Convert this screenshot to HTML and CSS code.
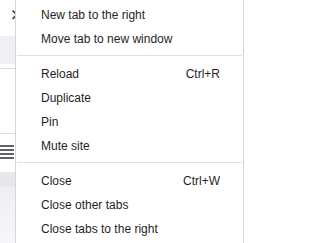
FILE: index.html
```html
<!DOCTYPE html>
<html>
<head>
<meta charset="utf-8">
<link rel="stylesheet" href="styles.css">
</head>
<body>
<div class="page">
  <div class="side">
    <div class="side-top">
      <svg class="close-ic" width="15" height="36" viewBox="0 0 15 36">
        <path d="M12.5 10.5 L17 15 M12.5 19 L17 14.5" stroke="#3c4043" stroke-width="1.6" fill="none"/>
      </svg>
    </div>
    <div class="side-tab"></div>
    <div class="side-gap4"></div>
    <div class="side-line"></div>
    <div class="side-gap64"></div>
    <div class="side-line"></div>
    <div class="side-icon">
      <span class="bar"></span>
      <span class="bar"></span>
      <span class="bar"></span>
      <span class="bar"></span>
    </div>
    <div class="side-row"></div>
    <div class="side-rest"></div>
  </div>
  <div class="menu">
    <div class="item"><span>New tab to the right</span></div>
    <div class="item"><span>Move tab to new window</span></div>
    <div class="sep"></div>
    <div class="item"><span>Reload</span><span class="key">Ctrl+R</span></div>
    <div class="item"><span>Duplicate</span></div>
    <div class="item"><span>Pin</span></div>
    <div class="item"><span>Mute site</span></div>
    <div class="sep"></div>
    <div class="item"><span>Close</span><span class="key">Ctrl+W</span></div>
    <div class="item"><span>Close other tabs</span></div>
    <div class="item"><span>Close tabs to the right</span></div>
  </div>
</div>
</body>
</html>
```

FILE: styles.css
```css
html, body {
  margin: 0;
  padding: 0;
  background: #ffffff;
}
body {
  width: 244px;
  height: 243px;
  overflow: hidden;
  font-family: "Liberation Sans", Arial, sans-serif;
}
.page {
  display: flex;
  height: 243px;
}
.side {
  width: 15px;
  flex: none;
  display: flex;
  flex-direction: column;
  overflow: hidden;
}
.side-top {
  height: 36px;
  background: #ffffff;
}
.close-ic {
  display: block;
}
.side-tab {
  height: 28px;
  background: #eff0f3;
}
.side-gap4 {
  height: 4px;
}
.side-line {
  height: 1px;
  background: #dcdde0;
}
.side-gap64 {
  height: 64px;
}
.side-icon {
  height: 38px;
  padding-top: 11px;
  box-sizing: border-box;
  display: flex;
  flex-direction: column;
  gap: 2px;
}
.bar {
  display: block;
  width: 14px;
  height: 2px;
  background: #5f6368;
}
.side-row {
  height: 15px;
  background: #e8e8ec;
}
.side-rest {
  flex: 1;
  background: linear-gradient(#eeeff3, #f7f7fa);
}
.menu {
  flex: 1;
  background: #ffffff;
  border-left: 1px solid #d6d6d6;
  border-right: 1px solid #d6d6d6;
  padding-top: 3px;
  color: #1f1f1f;
  font-size: 12px;
}
.item {
  height: 24px;
  line-height: 24px;
  padding: 0 23px 0 25px;
  display: flex;
  justify-content: space-between;
  white-space: nowrap;
}
.sep {
  height: 1px;
  background: #e0e0e0;
  margin: 4px 1px 6px 1px;
}
```
